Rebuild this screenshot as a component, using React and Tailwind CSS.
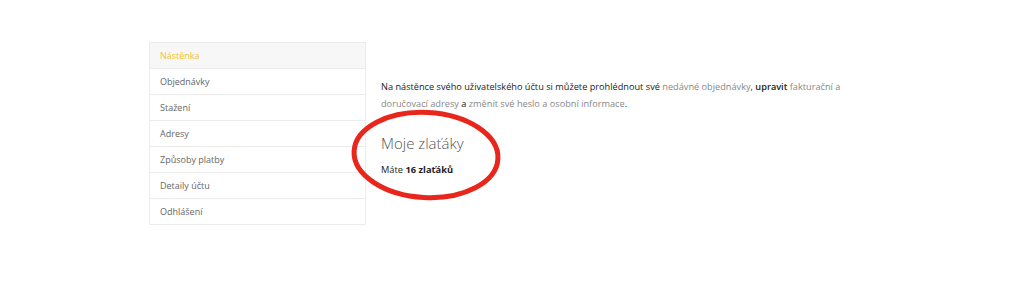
export default function App() {
  const items = ["Objednávky", "Stažení", "Adresy", "Způsoby platby", "Detaily účtu", "Odhlášení"];
  return (
    <div className="relative w-[1024px] h-[306px] bg-white overflow-hidden" style={{ fontFamily: '"Open Sans", sans-serif' }}>
      <div className="flex pt-[42px] pl-[149px]">
        <ul className="w-[217px] border border-[#ececec] border-b-0 shrink-0">
          <li className="h-[26px] flex items-center pl-[10px] bg-[#f7f7f7] border-b border-[#ececec] text-[9px] text-[#f5c12e]">Nástěnka</li>
          {items.map((t) => (
            <li key={t} className="h-[26px] flex items-center pl-[10px] border-b border-[#ececec] text-[9px] text-[#666]">{t}</li>
          ))}
        </ul>
        <div className="ml-[15px] pt-[36px] w-[462px]">
          <p className="text-[9.2px] leading-[17px] text-[#222]">
            Na nástěnce svého uživatelského účtu si můžete prohlédnout své <span className="text-[#888]">nedávné objednávky</span>, <b className="font-semibold">upravit</b> <span className="text-[#888]">fakturační a doručovací adresy</span> a <span className="text-[#888]">změnit své heslo a osobní informace</span>.
          </p>
          <h2 className="mt-[20px] text-[15px] leading-[22px] font-light text-[#555]">Moje zlaťáky</h2>
          <p className="mt-[9px] text-[9.3px] leading-[14px] text-[#222]">Máte <b className="font-bold">16 zlaťáků</b></p>
        </div>
      </div>
      <svg className="absolute left-[345px] top-[105px]" width="165" height="105" viewBox="0 0 165 105">
        <ellipse cx="81" cy="50" rx="72" ry="42.5" fill="none" stroke="#e8261c" strokeWidth="5" transform="rotate(3 81 50)" />
      </svg>
    </div>
  );
}
